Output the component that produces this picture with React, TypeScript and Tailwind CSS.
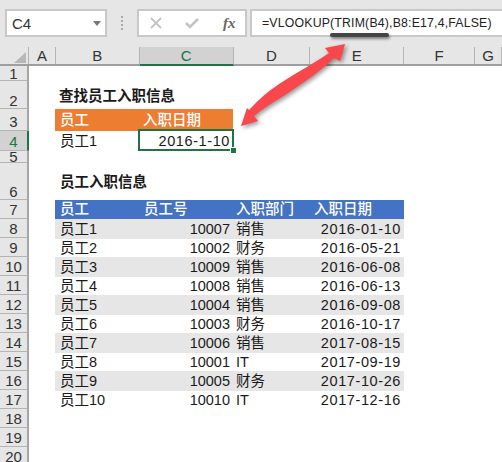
import React from 'react';

const fontCell = "[font-family:'Liberation_Sans','Noto_Sans_CJK_SC',sans-serif]";

const rowLabels = [
    { n: 1, cls: 'h-[15px] items-center', active: false },
    { n: 2, cls: 'h-[28px] items-end', active: false },
    { n: 3, cls: 'h-[22px] items-end pb-[1px]', active: false },
    { n: 4, cls: 'h-[20px] items-center pt-[1px]', active: true },
    { n: 5, cls: 'h-[12px] items-center leading-[11px]', active: false },
    { n: 6, cls: 'h-[37px] items-end', active: false },
    ...[7, 8, 9, 10, 11, 12, 13, 14, 15, 16, 17, 18, 19, 20].map(n => ({ n, cls: 'h-[19px] items-center pt-[1px]', active: false })),
];

const columns = [
    { name: 'A', cls: 'w-[27px]', active: false },
    { name: 'B', cls: 'w-[84px]', active: false },
    { name: 'C', cls: 'w-[94px]', active: true },
    { name: 'D', cls: 'w-[77px]', active: false },
    { name: 'E', cls: 'w-[94px]', active: false },
    { name: 'F', cls: 'w-[71px]', active: false },
    { name: 'G', cls: 'w-[27px]', active: false },
];

const employees = [
    ['员工1', '10007', '销售', '2016-01-10'],
    ['员工2', '10002', '财务', '2016-05-21'],
    ['员工3', '10009', '销售', '2016-06-08'],
    ['员工4', '10008', '销售', '2016-06-13'],
    ['员工5', '10004', '销售', '2016-09-08'],
    ['员工6', '10003', '财务', '2016-10-17'],
    ['员工7', '10006', '销售', '2017-08-15'],
    ['员工8', '10001', 'IT', '2017-09-19'],
    ['员工9', '10005', '财务', '2017-10-26'],
    ['员工10', '10010', 'IT', '2017-12-16'],
];

function App() {
    return (
        <div className={`relative w-[502px] h-[462px] overflow-hidden bg-white text-[14.5px] leading-none text-[#1a1a1a] ${fontCell}`}>
            {/* 수식 입력줄 */}
            <div className="flex h-[47px] bg-[#e6e6e6] pt-[9px] pl-[5px]">
                <div className="flex shrink-0 items-center justify-between w-[102px] h-[28px] bg-white border-2 border-[#c8c8c8] pl-[5px] pr-[4px] text-[15px] text-[#333]">
                    <span>C4</span>
                    <span className="w-0 h-0 border-x-[4px] border-x-transparent border-t-[5px] border-t-[#777]"></span>
                </div>
                <div className="flex shrink-0 flex-col justify-center gap-[2px] w-[30px] h-[28px] items-center">
                    <span className="w-[2px] h-[2px] bg-[#aaa]"></span>
                    <span className="w-[2px] h-[2px] bg-[#aaa]"></span>
                    <span className="w-[2px] h-[2px] bg-[#aaa]"></span>
                    <span className="w-[2px] h-[2px] bg-[#aaa]"></span>
                </div>
                <div className="flex shrink-0 items-center w-[110px] h-[28px] bg-white border-2 border-[#c8c8c8]">
                    <svg width="12" height="12" viewBox="0 0 12 12" className="ml-[11px]">
                        <path d="M1 1 L11 11 M11 1 L1 11" stroke="#c4c4c4" strokeWidth="1.8" fill="none" />
                    </svg>
                    <svg width="14" height="12" viewBox="0 0 14 12" className="ml-[23px]">
                        <path d="M1 6 L5 10 L13 2" stroke="#c4c4c4" strokeWidth="2.6" fill="none" />
                    </svg>
                    <span className="ml-[24px] italic font-bold text-[#666] text-[15px] [font-family:'Liberation_Serif',serif]">fx</span>
                </div>
                <div className="flex items-center flex-1 min-w-0 ml-[3px] h-[28px] bg-white border-y-2 border-l-2 border-[#c8c8c8] pl-[10px] text-[12.3px] tracking-[0.18px] text-[#222] whitespace-nowrap">
                    =VLOOKUP(TRIM(B4),B8:E17,4,FALSE)
                </div>
            </div>

            {/* 열 머리글 */}
            <div className="flex h-[19px] bg-[#e6e6e6] border-b-2 border-[#9f9f9f] text-[15px] text-[#333]">
                <div className="relative w-[29px] border-r border-[#b4b4b4]">
                    <svg width="12" height="12" viewBox="0 0 12 12" className="absolute left-[14px] top-[5px]">
                        <path d="M12 0 V11 H0 Z" fill="#b8b8b8" />
                    </svg>
                </div>
                {columns.map(col => (
                    <div
                        key={col.name}
                        className={`${col.cls} flex items-center justify-center border-r border-[#b4b4b4] ${col.active ? 'bg-[#d2d2d2] text-[#217346] border-b-2 border-b-[#217346] -mb-[2px]' : ''}`}
                    >
                        {col.name}
                    </div>
                ))}
            </div>

            <div className="flex">
                {/* 행 머리글 */}
                <div className="w-[29px] shrink-0 bg-[#e6e6e6] border-r-2 border-[#a6a6a6] text-[15px] text-[#333]">
                    {rowLabels.map(row => (
                        <div
                            key={row.n}
                            className={`${row.cls} flex justify-center border-b border-[#b4b4b4] ${row.active ? 'bg-[#d2d2d2] text-[#217346] -mr-[2px] border-r-2 border-r-[#217346]' : ''}`}
                        >
                            {row.n}
                        </div>
                    ))}
                </div>

                {/* 시트 */}
                <div className="flex-1">
                    <div className="h-[15px]"></div>
                    <div className="flex items-end h-[28px] pb-[6px] pl-[30px] font-bold">查找员工入职信息</div>

                    <div className="flex h-[22px] ml-[26px] w-[178px] items-center bg-[#ed7d31] text-white font-medium">
                        <div className="w-[84px] pl-[5px]">员工</div>
                        <div className="flex-1 pl-[4px]">入职日期</div>
                    </div>
                    <div className="flex h-[20px] ml-[26px] w-[178px] items-center">
                        <div className="w-[84px] pl-[5px]">员工1</div>
                        <div className="flex-1 pr-[3px] text-right tracking-[0.6px]">2016-1-10</div>
                    </div>

                    <div className="h-[12px]"></div>
                    <div className="flex items-end h-[37px] pb-[11px] pl-[31px] font-bold">员工入职信息</div>

                    <div className="flex h-[19px] ml-[26px] w-[349px] items-center bg-[#4472c4] text-white font-medium">
                        <div className="w-[84px] pl-[5px]">员工</div>
                        <div className="w-[94px] pl-[5px]">员工号</div>
                        <div className="w-[77px] pl-[3px]">入职部门</div>
                        <div className="w-[94px] pl-[4px]">入职日期</div>
                    </div>
                    {employees.map((e, i) => (
                        <div
                            key={e[0]}
                            className={`flex ml-[26px] w-[349px] items-center ${i % 2 === 0 ? 'h-[20px] bg-[#e7e6e6]' : 'h-[18px]'}`}
                        >
                            <div className="w-[84px] pl-[5px]">{e[0]}</div>
                            <div className="w-[94px] pr-[3px] text-right">{e[1]}</div>
                            <div className="w-[77px] pl-[3px]">{e[2]}</div>
                            <div className="w-[94px] pr-[3px] text-right tracking-[0.6px]">{e[3]}</div>
                        </div>
                    ))}
                </div>
            </div>

            {/* 선택 셀 */}
            <div className="absolute left-[138px] top-[129px] w-[96px] h-[22px] border-2 border-[#217346]"></div>
            <div className="absolute left-[230px] top-[147px] w-[5px] h-[5px] bg-[#217346] border-l border-t border-white box-content"></div>

            {/* 주석 */}
            <div className="absolute left-[330px] top-[33px] w-[59px] h-[4px] rounded-full bg-[#444] shadow-[1px_2px_3px_rgba(0,0,0,0.45)]"></div>
            <svg width="502" height="462" viewBox="0 0 502 462" className="absolute left-0 top-0 drop-shadow-[2px_2px_2px_rgba(0,0,0,0.4)]">
                <path
                    d="M345 44 L325 48 L329 53 C310 66 290 76 272 89 C262 96 255 104 249 110 L247 108 L241 126 L258 121 L254 116 C262 109 272 103 282 97 C300 85 320 72 334 58 L340 61 Z"
                    fill="#f9474c"
                />
            </svg>
        </div>
    );
}

export default App;
